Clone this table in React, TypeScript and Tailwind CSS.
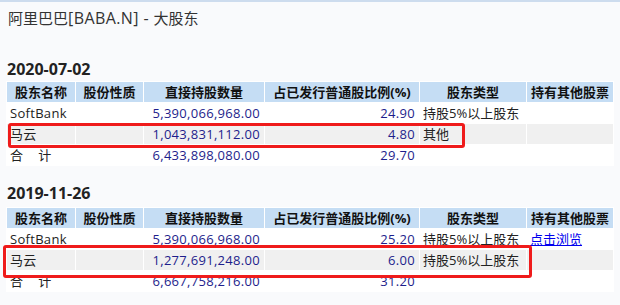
type Row = {
  name: string;
  nature: string;
  shares: string;
  ratio: string;
  type: string;
  other?: string;
  gray?: boolean;
  total?: boolean;
};

const sections: { date: string; rows: Row[] }[] = [
  {
    date: "2020-07-02",
    rows: [
      { name: "SoftBank", nature: "", shares: "5,390,066,968.00", ratio: "24.90", type: "持股5%以上股东" },
      { name: "马云", nature: "", shares: "1,043,831,112.00", ratio: "4.80", type: "其他", gray: true },
      { name: "合计", nature: "", shares: "6,433,898,080.00", ratio: "29.70", type: "", total: true },
    ],
  },
  {
    date: "2019-11-26",
    rows: [
      { name: "SoftBank", nature: "", shares: "5,390,066,968.00", ratio: "25.20", type: "持股5%以上股东", other: "点击浏览" },
      { name: "马云", nature: "", shares: "1,277,691,248.00", ratio: "6.00", type: "持股5%以上股东", gray: true },
      { name: "合计", nature: "", shares: "6,667,758,216.00", ratio: "31.20", type: "", total: true },
    ],
  },
];

const headers = ["股东名称", "股份性质", "直接持股数量", "占已发行普通股比例(%)", "股东类型", "持有其他股票"];

function HolderTable({ rows }: { rows: Row[] }) {
  return (
    <table className="table-fixed border-separate border-spacing-px bg-white w-[608px] ml-[6px] text-[13px] leading-[20px]">
      <colgroup>
        <col className="w-[68px]" />
        <col className="w-[67px]" />
        <col className="w-[120px]" />
        <col className="w-[154px]" />
        <col className="w-[106px]" />
        <col className="w-[86px]" />
      </colgroup>
      <thead>
        <tr>
          {headers.map((h) => (
            <th key={h} className="bg-[#c5ddf4] h-[20px] p-0 font-bold text-[#111] text-center whitespace-nowrap">
              {h}
            </th>
          ))}
        </tr>
      </thead>
      <tbody>
        {rows.map((r) => (
          <tr key={r.name} className={r.gray ? "bg-[#f0f0f0]" : ""}>
            <td className="h-[20px] p-0 pl-[3px] text-[#222] whitespace-nowrap tracking-[0.3px]">
              {r.total ? (
                <>
                  合<span className="ml-[15px]">计</span>
                </>
              ) : (
                r.name
              )}
            </td>
            <td className="p-0">{r.nature}</td>
            <td className="p-0 pr-[4px] text-right text-[#1e1e8c] tracking-[0.3px]">{r.shares}</td>
            <td className="p-0 pr-[4px] text-right text-[#1e1e8c] tracking-[0.3px]">{r.ratio}</td>
            <td className="p-0 pl-[3px] text-[#222] whitespace-nowrap">{r.type}</td>
            <td className="p-0 pl-[3px] whitespace-nowrap">
              {r.other && <a className="text-[#0000ee] underline cursor-pointer">{r.other}</a>}
            </td>
          </tr>
        ))}
      </tbody>
    </table>
  );
}

export default function App() {
  return (
    <div
      className="relative w-[620px] h-[305px] overflow-hidden bg-[#f9fafc] border-t-2 border-[#cddcee]"
      style={{ fontFamily: '"Open Sans", "Noto Sans CJK SC", sans-serif' }}
    >
      <div className="ml-[8px] mt-[5px] h-[22px] text-[15px] leading-[22px] text-[#333]">
        阿里巴巴<span className="text-[16px] tracking-[0.4px]">[BABA.N] - </span>大股东
      </div>

      <div className="ml-[7px] mt-[30px] mb-[2px] h-[20px] text-[16px] leading-[20px] font-bold text-[#222]">{sections[0].date}</div>
      <HolderTable rows={sections[0].rows} />

      <div className="ml-[7px] mt-[17px] mb-[4px] h-[20px] text-[16px] leading-[20px] font-bold text-[#222]">{sections[1].date}</div>
      <HolderTable rows={sections[1].rows} />

      <div className="absolute left-[8px] top-[121px] w-[457px] h-[25px] border-[3px] border-[#ef1b1b] rounded-[3px]" />
      <div className="absolute left-[3px] top-[243px] w-[529px] h-[33px] border-[3px] border-[#ef1b1b] rounded-[3px]" />
    </div>
  );
}
